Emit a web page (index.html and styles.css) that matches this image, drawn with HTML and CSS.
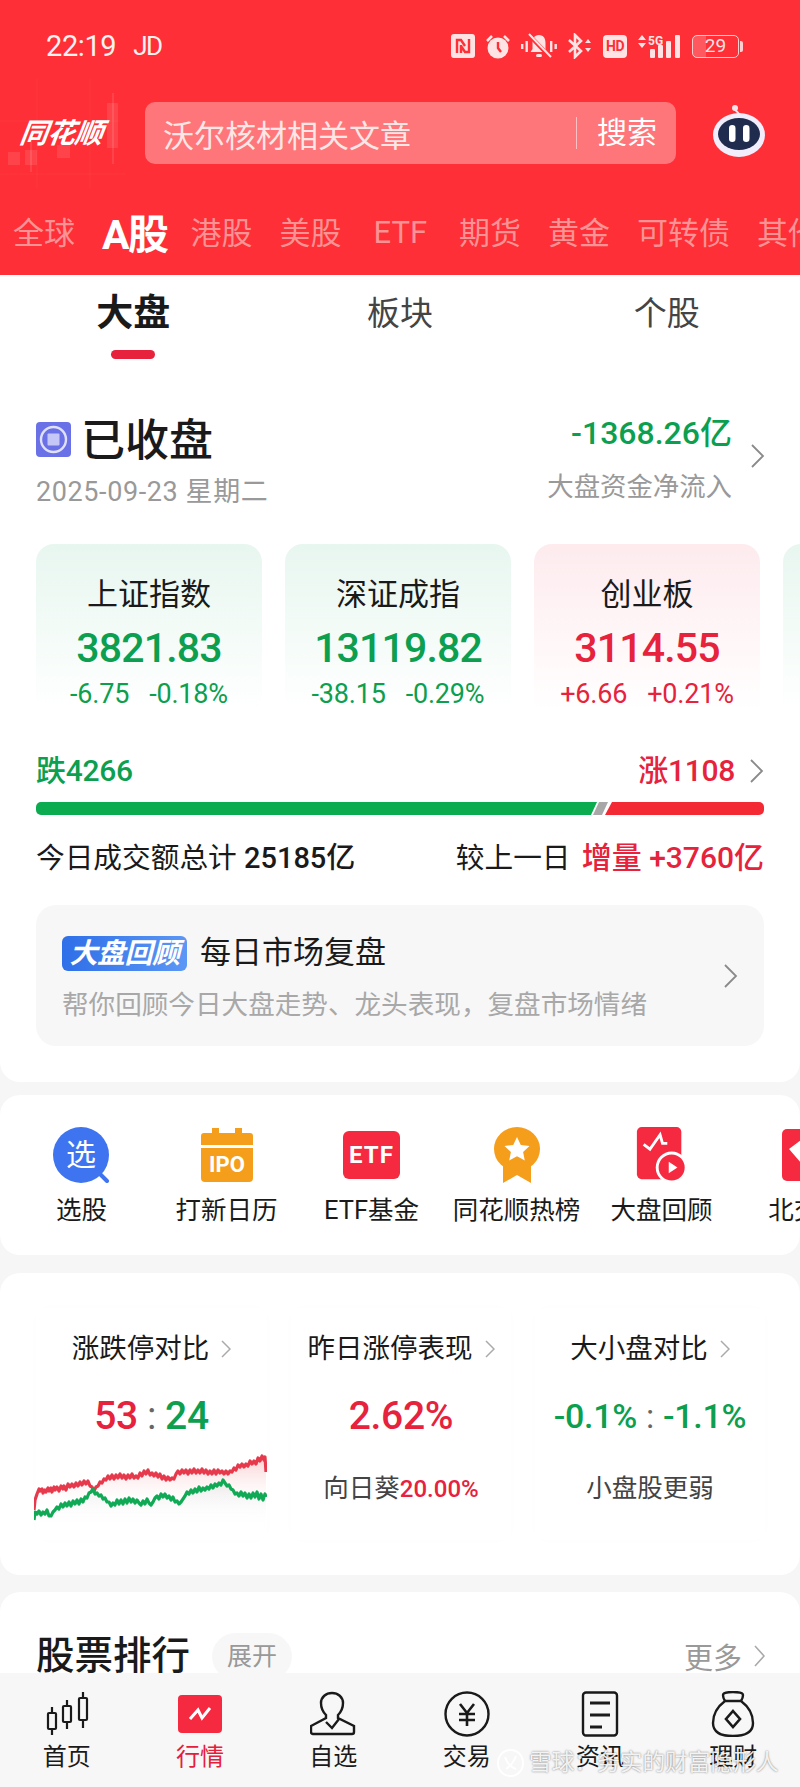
FILE: index.html
```html
<!DOCTYPE html>
<html lang="zh-CN">
<head>
<meta charset="utf-8">
<title>行情</title>
<link rel="stylesheet" href="styles.css">
</head>
<body>
<div class="app">
  <header class="hero">
    <div class="status">
      <div class="clock"><span>22:19</span><span class="carrier">JD</span></div>
      <div class="sys">
        <svg width="24" height="24" viewBox="0 0 24 24"><rect x="0" y="0" width="24" height="24" rx="3" fill="#fde3e3"/><path d="M6 19V6h4l4 6M10 11v8M18 5v13h-4l-4-6" fill="none" stroke="#fe2f36" stroke-width="2.4"/></svg>
        <svg width="26" height="25" viewBox="0 0 26 25"><path d="M2 7l5-5M24 7l-5-5" stroke="#fde3e3" stroke-width="2.6"/><circle cx="13" cy="14" r="10.5" fill="#fde3e3"/><path d="M13 8v6l3 4" fill="none" stroke="#fe2f36" stroke-width="2.4"/></svg>
        <svg width="36" height="26" viewBox="0 0 36 26"><g fill="#fde3e3"><rect x="0" y="11" width="2.4" height="5"/><rect x="4.5" y="8" width="2.4" height="11"/><rect x="29" y="8" width="2.4" height="11"/><rect x="33.5" y="11" width="2.4" height="5"/><path d="M18 2c5 0 6.500 4 6.500 8v6l2 3H9.500l2-3v-6c0-4 1.500-8 6.500-8z"/><rect x="15" y="21" width="6" height="3" rx="1.500"/></g><path d="M8 2l21 22" stroke="#fe2f36" stroke-width="4"/><path d="M8 1l22 23" stroke="#fde3e3" stroke-width="2"/></svg>
        <svg width="26" height="26" viewBox="0 0 26 26"><path d="M2 7l12 11-6 6V2l6 6L2 19" fill="none" stroke="#fde3e3" stroke-width="2.6"/><path d="M18 10l3-4 3 4zM18 15h6l-3 4z" fill="#fde3e3"/></svg>
        <div class="hd">HD</div>
        <svg width="45" height="25" viewBox="0 0 45 25"><path d="M1 6l4-5 4 5zM1 9h8l-4 5z" fill="#fde3e3"/><text x="11" y="11" class="fiveg">5G</text><g fill="#fde3e3"><rect x="13" y="15" width="5" height="9" rx="1"/><rect x="21" y="11" width="5" height="13" rx="1"/><rect x="29" y="7" width="5" height="17" rx="1"/><rect x="38" y="1" width="5" height="23" rx="1"/></g></svg>
        <div class="batt"><span class="batt-num">29</span></div>
      </div>
    </div>
    <div class="search-row">
      <div class="logo">
        <svg class="logo-bg" width="145" height="120" viewBox="0 0 145 120"><g fill="#fff" fill-opacity=".1"><rect x="8" y="74" width="12" height="13"/><rect x="25" y="72" width="12" height="15"/><rect x="30" y="62" width="2" height="32"/><rect x="57" y="67" width="13" height="13"/><rect x="107" y="25" width="11" height="45"/><rect x="112" y="15" width="2" height="71"/></g><g stroke="#fff" stroke-opacity=".05"><path d="M0 43h120M0 96h125M37 0v110M90 0v110"/></g></svg>
        <span class="logo-text">同花顺</span>
      </div>
      <div class="search">
        <span class="search-hint">沃尔核材相关文章</span>
        <span class="search-btn">搜索</span>
      </div>
      <svg class="robot" width="54" height="52" viewBox="0 0 54 52"><circle cx="23" cy="3" r="3" fill="#f5e4ea"/><path d="M23 4c1 3 4 3 4 6" stroke="#f5e4ea" stroke-width="2" fill="none"/><ellipse cx="27" cy="30" rx="26" ry="22" fill="#f1edfb"/><ellipse cx="27" cy="29" rx="21" ry="16" fill="#1f2c4d"/><rect x="17" y="20" width="6.500" height="17" rx="3.200" fill="#fff"/><rect x="31" y="20" width="6.500" height="17" rx="3.200" fill="#fff"/></svg>
    </div>
    <nav class="markets">
      <span class="market">全球</span>
      <span class="market market-on">A股</span>
      <span class="market">港股</span>
      <span class="market">美股</span>
      <span class="market market-latin">ETF</span>
      <span class="market">期货</span>
      <span class="market">黄金</span>
      <span class="market">可转债</span>
      <span class="market">其他</span>
    </nav>
  </header>

  <div class="scroll">
    <section class="panel overview">
      <nav class="subtabs">
        <div class="subtab subtab-on">大盘<i class="subtab-bar"></i></div>
        <div class="subtab">板块</div>
        <div class="subtab">个股</div>
      </nav>

      <div class="close-row">
        <div class="close-left">
          <div class="close-title">
            <svg width="35" height="35" viewBox="0 0 35 35"><rect width="35" height="35" rx="4" fill="#6a70e6"/><circle cx="17.500" cy="17.500" r="12.500" fill="none" stroke="#dfe1fb" stroke-width="2.400"/><rect x="11.500" y="11.500" width="12" height="12" rx="1" fill="#c5c8f6"/></svg>
            <span>已收盘</span>
          </div>
          <div class="close-date">2025-09-23 星期二</div>
        </div>
        <div class="flow">
          <div class="flow-text">
            <div class="flow-num">-1368.26亿</div>
            <div class="flow-label">大盘资金净流入</div>
          </div>
          <svg class="chev-lg" width="15" height="26" viewBox="0 0 15 26"><path d="M2 2l11 11L2 24" fill="none" stroke="#8a8a8a" stroke-width="1.800"/></svg>
        </div>
      </div>

      <div class="indices">
        <div class="index index-down">
          <div class="index-name">上证指数</div>
          <div class="index-val down">3821.83</div>
          <div class="index-chg down"><span>-6.75</span><span>-0.18%</span></div>
        </div>
        <div class="index index-down">
          <div class="index-name">深证成指</div>
          <div class="index-val down">13119.82</div>
          <div class="index-chg down"><span>-38.15</span><span>-0.29%</span></div>
        </div>
        <div class="index index-up">
          <div class="index-name">创业板</div>
          <div class="index-val up">3114.55</div>
          <div class="index-chg up"><span>+6.66</span><span>+0.21%</span></div>
        </div>
        <div class="index index-down"></div>
      </div>

      <div class="breadth">
        <span class="breadth-n down">跌4266</span>
        <span class="breadth-r">
          <span class="breadth-n up">涨1108</span>
          <svg width="15" height="26" viewBox="0 0 15 26"><path d="M2 2l11 11L2 24" fill="none" stroke="#8a8a8a" stroke-width="1.800"/></svg>
        </span>
      </div>
      <div class="bar">
        <i class="bar-green"></i>
        <i class="bar-gray"></i>
        <i class="bar-red"></i>
      </div>

      <div class="turnover">
        <span>今日成交额总计 <b>25185亿</b></span>
        <span>较上一日 <b class="up turnover-delta">增量 +3760亿</b></span>
      </div>

      <div class="review">
        <div class="review-body">
          <div class="review-head">
            <span class="review-badge">大盘回顾</span>
            <span class="review-title">每日市场复盘</span>
          </div>
          <div class="review-sub">帮你回顾今日大盘走势、龙头表现，复盘市场情绪</div>
        </div>
        <svg width="15" height="26" viewBox="0 0 15 26"><path d="M2 2l11 11L2 24" fill="none" stroke="#8a8a8a" stroke-width="1.800"/></svg>
      </div>
    </section>

    <section class="panel shortcuts">
      <div class="shortcut">
        <svg width="58" height="56" viewBox="0 0 58 56"><path d="M44 44l10 10" stroke="#3f74f0" stroke-width="4" stroke-linecap="round"/><circle cx="28" cy="28" r="28" fill="#3f74f0"/><text x="28" y="38" class="icon-xuan">选</text></svg>
        <span class="shortcut-label">选股</span>
      </div>
      <div class="shortcut">
        <svg width="52" height="54" viewBox="0 0 52 54"><path d="M0 8a3 3 0 0 1 3-3h8V0h7v5h16V0h7v5h8a3 3 0 0 1 3 3v9H0z" fill="#f59e1c"/><path d="M0 20h52v30a4 4 0 0 1-4 4H4a4 4 0 0 1-4-4z" fill="#f59e1c"/><text x="26" y="44" class="icon-ipo">IPO</text></svg>
        <span class="shortcut-label">打新日历</span>
      </div>
      <div class="shortcut">
        <svg width="57" height="48" viewBox="0 0 57 48"><rect width="57" height="48" rx="6" fill="#f5293f"/><text x="28.500" y="32" class="icon-etf">ETF</text></svg>
        <span class="shortcut-label">ETF基金</span>
      </div>
      <div class="shortcut">
        <svg width="46" height="56" viewBox="0 0 46 56"><path d="M9 34v22l14-8 14 8V34z" fill="#f59e1c"/><ellipse cx="23" cy="22" rx="23" ry="22" fill="#f59e1c"/><path d="M23 10l3.800 8 8.700 1-6.400 6 1.700 8.600L23 29.300l-7.800 4.300 1.700-8.600-6.400-6 8.700-1z" fill="#fff"/></svg>
        <span class="shortcut-label">同花顺热榜</span>
      </div>
      <div class="shortcut">
        <svg width="52" height="58" viewBox="0 0 52 58"><rect width="46" height="54" rx="5" fill="#f5293f"/><path d="M7 18l6.500 5L24 8l2.500 9h5" fill="none" stroke="#fff" stroke-width="3"/><circle cx="36" cy="42" r="15" fill="#f5293f" stroke="#fff" stroke-width="3"/><path d="M33 36l9 6-9 6z" fill="#fff"/></svg>
        <span class="shortcut-label">大盘回顾</span>
      </div>
      <div class="shortcut">
        <svg width="50" height="52" viewBox="0 0 50 52"><rect width="50" height="52" rx="5" fill="#f5293f"/><path d="M7 20l12-9 13 9-13 14z" fill="#fff"/></svg>
        <span class="shortcut-label">北交所</span>
      </div>
    </section>

    <section class="panel compare">
      <div class="cmp">
        <div class="cmp-title">涨跌停对比<svg width="10" height="20" viewBox="0 0 10 20"><path d="M1 2l8 8-8 8" fill="none" stroke="#aaa" stroke-width="1.500"/></svg></div>
        <div class="cmp-val"><span class="up">53</span><span class="sep">:</span><span class="down">24</span></div>
        <svg class="cmp-chart" width="233" height="80" viewBox="0 0 233 80">
          <defs>
            <linearGradient id="fillRed" x1="0" y1="0" x2="0" y2="1"><stop offset="0" stop-color="#f9c3c6" stop-opacity=".75"/><stop offset="1" stop-color="#fff" stop-opacity="0"/></linearGradient>
            <linearGradient id="fillGreen" x1="0" y1="0" x2="0" y2="1"><stop offset="0" stop-color="#ddd" stop-opacity=".5"/><stop offset="1" stop-color="#fff" stop-opacity="0"/></linearGradient>
          </defs>
          <path d="M0 60L2 47 6 40 14 39 21 38 29 37 37 35 47 33 52 32 56 34 60 40 65 35 70 30 76 26 86 25 99 25 109 23 114 21 125 24 135 29 144 22 155 23 171 20 184 21 196 22 206 15 217 12 226 8 232 8V60H0z" fill="url(#fillRed)"/>
          <path d="M0 70L8 65 17 66 25 59 35 56 45 54 54 47 58 41 68 46 79 55 89 53 104 51 119 53 129 46 145 52 154 43 167 38 182 36 190 31 204 44 218 43 232 47V80H0z" fill="url(#fillGreen)"/>
          <path d="M0 60L1 50 2 47 3 44 5 39 6 41 8 39 9 43 11 40 12 42 14 38 15 41 17 38 18 42 20 37 21 40 23 37 25 41 27 36 29 39 30 36 32 40 34 34 36 37 38 34 40 37 42 33 44 36 46 32 48 35 50 31 52 34 54 31 56 36 58 37 60 41 62 37 64 36 66 32 68 33 70 29 72 30 74 26 76 29 78 25 80 29 82 25 84 28 86 24 88 28 90 25 92 29 94 25 96 28 98 24 100 28 102 26 104 28 106 23 108 26 110 21 112 24 114 20 116 25 118 23 120 26 122 23 124 27 126 24 128 29 130 26 132 30 134 27 136 30 138 28 140 29 142 24 144 21 146 24 148 20 150 23 152 20 154 24 156 20 158 23 160 19 162 23 164 20 166 23 168 19 170 23 172 20 174 24 176 21 178 24 180 20 182 24 184 20 186 23 188 21 190 24 192 21 194 24 196 21 198 22 200 18 202 20 204 15 206 17 208 14 210 17 212 14 214 16 216 11 218 14 220 11 222 14 224 8 226 11 228 6 230 10 231 7 232 22" fill="none" stroke="#e6394c" stroke-width="3.200" stroke-linejoin="round"/>
          <path d="M0 70L1 62 3 64 5 61 7 65 9 62 11 64 13 60 15 66 17 66 19 62 21 60 23 57 25 59 27 54 29 57 31 53 33 56 35 52 37 56 39 51 41 54 43 50 45 54 47 49 49 52 51 47 53 48 55 43 57 42 59 39 61 44 63 43 65 46 67 45 69 49 71 48 73 52 75 52 77 56 79 53 81 55 83 50 85 54 87 50 89 54 91 49 93 53 95 48 97 52 99 49 101 53 103 50 105 53 107 55 109 51 111 54 113 49 115 53 117 55 119 52 121 48 123 46 125 49 127 44 129 47 131 44 133 48 135 46 137 50 139 47 141 52 143 51 145 54 147 52 149 49 151 46 153 42 155 44 157 40 159 43 161 39 163 42 165 37 167 41 169 38 171 40 173 37 175 39 177 35 179 38 181 34 183 36 185 33 187 35 189 30 191 33 193 36 195 35 197 39 199 40 201 44 203 43 205 46 207 42 209 46 211 43 213 48 215 44 217 48 219 43 221 47 223 42 225 49 227 44 229 50 231 44 232 47" fill="none" stroke="#10a955" stroke-width="3.200" stroke-linejoin="round"/>
        </svg>
      </div>
      <div class="cmp">
        <div class="cmp-title">昨日涨停表现<svg width="10" height="20" viewBox="0 0 10 20"><path d="M1 2l8 8-8 8" fill="none" stroke="#aaa" stroke-width="1.500"/></svg></div>
        <div class="cmp-val up">2.62%</div>
        <div class="cmp-sub">向日葵<span class="up">20.00%</span></div>
      </div>
      <div class="cmp">
        <div class="cmp-title">大小盘对比<svg width="10" height="20" viewBox="0 0 10 20"><path d="M1 2l8 8-8 8" fill="none" stroke="#aaa" stroke-width="1.500"/></svg></div>
        <div class="cmp-val cmp-val-sm"><span class="down">-0.1%</span><span class="sep">:</span><span class="down">-1.1%</span></div>
        <div class="cmp-sub">小盘股更弱</div>
      </div>
    </section>

    <section class="panel ranking">
      <h2 class="rank-title">股票排行</h2>
      <span class="rank-pill">展开</span>
      <span class="rank-more">更多<svg width="11" height="24" viewBox="0 0 11 24"><path d="M1 2l9 10-9 10" fill="none" stroke="#aaa" stroke-width="1.600"/></svg></span>
    </section>
  </div>

  <nav class="tabbar">
    <div class="tab">
      <svg width="44" height="44" viewBox="0 0 44 44" fill="none" stroke="#1a1a1a" stroke-width="2.200"><rect x="3" y="21" width="8" height="16" rx="1"/><path d="M7 15v6M7 37v6"/><rect x="18" y="14" width="8" height="16" rx="1"/><path d="M22 8v6M22 30v7"/><rect x="34" y="6" width="8" height="22" rx="1"/><path d="M38 0v6M38 28v8"/></svg>
      <span class="tab-label">首页</span>
    </div>
    <div class="tab tab-on">
      <svg width="44" height="44" viewBox="0 0 44 44"><rect x="0" y="3" width="44" height="38" rx="4" fill="#f5293f"/><path d="M12 27l8-9 4 8 8-10" fill="none" stroke="#fff" stroke-width="3"/></svg>
      <span class="tab-label">行情</span>
    </div>
    <div class="tab">
      <svg width="46" height="44" viewBox="0 0 46 44" fill="none" stroke="#1a1a1a" stroke-width="2.400"><path d="M16 23c-3-3-5-7-5-12 0-6 5-10 11-10s11 4 11 10c0 5-2 9-5 12v3l16 8v6a2 2 0 0 1-2 2H3a2 2 0 0 1-2-2v-6l15-8z"/><path d="M16 30l6 6 7-9"/></svg>
      <span class="tab-label">自选</span>
    </div>
    <div class="tab">
      <svg width="46" height="46" viewBox="0 0 46 46" fill="none" stroke="#1a1a1a" stroke-width="2.400"><circle cx="23" cy="23" r="21.500"/><path d="M16 13l7 9 7-9M15 23h16M15 29h16M23 22v13" stroke-width="2.600"/></svg>
      <span class="tab-label">交易</span>
    </div>
    <div class="tab">
      <svg width="38" height="46" viewBox="0 0 38 46" fill="none" stroke="#1a1a1a" stroke-width="2.400"><rect x="2" y="1.500" width="34" height="43" rx="3"/><path d="M9 12h20M9 24h20M9 36h12" stroke-width="2.800"/></svg>
      <span class="tab-label">资讯</span>
    </div>
    <div class="tab">
      <svg width="44" height="46" viewBox="0 0 44 46" fill="none" stroke="#1a1a1a" stroke-width="2.400"><path d="M14 10c-2-3-2-5-2-6 0-2 3-3 10-3s10 1 10 3c0 1 0 3-2 6"/><path d="M14 10h16c8 6 12 14 12 22 0 9-7 13-20 13S2 41 2 32c0-8 4-16 12-22z"/><path d="M22 20l7 8-7 8-7-8z" stroke-width="2.600"/></svg>
      <span class="tab-label">理财</span>
    </div>
  </nav>

  <div class="watermark">
    <svg width="27" height="28" viewBox="0 0 27 28" fill="none" stroke="#fff" stroke-width="2"><path d="M13.500 1C6 1 1 7 1 14s5 13 12.500 13S26 21 26 14 21 1 13.500 1z"/><path d="M8 8c2 6 5 10 11 12M19 7c-2 5-5 10-10 13"/></svg>
    <span>雪球：务实的财富隐形人</span>
  </div>
</div>
</body>
</html>
```

FILE: styles.css
```css
* { box-sizing: border-box; }
html, body { margin: 0; padding: 0; }
body {
  background: #f6f6f7;
  font-family: Roboto, "Noto Sans CJK SC", sans-serif;
  color: #1a1a1a;
}
.app {
  position: relative;
  width: 800px;
  height: 1787px;
  display: flex;
  flex-direction: column;
  overflow: hidden;
}
.up { color: #e6223c; }
.down { color: #0c9f4f; }

/* red header */
.hero { height: 275px; flex: none; background: #fe2f36; color: #fff; overflow: hidden; }
.status {
  height: 92px;
  padding: 0 58px 0 46px;
  display: flex;
  align-items: center;
  justify-content: space-between;
}
.clock { display: flex; gap: 17px; font-size: 29px; letter-spacing: -.4px; color: #fdf1f1; }
.carrier { font-size: 26px; letter-spacing: -1.500px; line-height: 34px; }
.sys { display: flex; align-items: center; gap: 10px; }
.hd {
  width: 24px; height: 23px;
  background: #fde3e3; color: #fe2f36; border-radius: 4px;
  font-size: 14px; font-weight: 700; line-height: 23px; text-align: center; letter-spacing: -.5px;
}
.fiveg { font-size: 12px; font-weight: 700; fill: #fde3e3; }
.batt {
  position: relative;
  width: 47px; height: 23px;
  margin-right: 3px;
  border: 1.500px solid #fbcfcf; border-radius: 5px;
  font-size: 19px; line-height: 20px; text-align: center; color: #fde3e3;
  background: linear-gradient(90deg, rgba(255,255,255,.2) 30%, transparent 30%);
}
.batt::after {
  content: "";
  position: absolute; right: -5px; top: 5px;
  width: 3px; height: 11px; border-radius: 0 2px 2px 0; background: #fbcfcf;
}
.search-row { height: 98px; display: flex; align-items: flex-start; }
.logo { position: relative; width: 145px; height: 98px; padding: 22px 0 0 20px; }
.logo-bg { position: absolute; left: 0; top: -14px; }
.logo-text {
  position: relative;
  display: block;
  font-size: 28px; font-style: italic; font-weight: 700; line-height: 40px; letter-spacing: -.5px;
  transform: skewX(-8deg);
  white-space: nowrap;
}
.search {
  width: 531px; height: 62px; margin-top: 10px;
  background: rgba(255,255,255,.34);
  border-radius: 10px;
  display: flex; align-items: center; justify-content: space-between;
  padding: 0 19px 0 18px;
}
.search-hint { font-size: 31px; color: #fde6e6; }
.search-btn {
  font-size: 30px; color: #fff; line-height: 32px;
  padding-left: 20px; border-left: 1px solid rgba(255,255,255,.55);
}
.robot { margin: 13px 0 0 36px; }
.markets {
  height: 85px; display: flex; align-items: center; gap: 27px;
  padding-left: 13px; padding-bottom: 4px; white-space: nowrap;
}
.market { flex: none; font-size: 31px; color: #fb9294; }
.market-latin { margin: 0 5px; font-size: 31px; padding-top: 3px; }
.market-on { margin-right: -4px; font-size: 41px; font-weight: 700; color: #fff; letter-spacing: -1.500px; }

/* scroll area */
.scroll { flex: 1; min-height: 0; overflow: hidden; }
.panel { background: #fff; border-radius: 20px; }

.overview { border-radius: 0 0 20px 20px; padding: 0 36px 36px; }
.subtabs { display: grid; grid-template-columns: repeat(3, 1fr); height: 95px; margin: 0 -36px; }
.subtab {
  display: flex; flex-direction: column; align-items: center;
  padding-top: 18px;
  font-size: 33px; line-height: 42px; color: #444;
}
.subtab-on { font-size: 37px; font-weight: 700; color: #1a1a1a; }
.subtab-bar { width: 44px; height: 9px; margin-top: 15px; border-radius: 5px; background: #e6223c; }

.close-row { margin-top: 41px; display: flex; justify-content: space-between; }
.close-left { margin-top: 5px; }
.close-title { display: flex; align-items: center; gap: 10px; font-size: 44px; line-height: 50px; font-weight: 500; color: #1a1a1a; }
.close-title svg { margin-top: -3px; }
.close-date { margin-top: 10px; font-size: 27px; line-height: 32px; color: #999; letter-spacing: .6px; }
.flow { display: flex; align-items: center; gap: 18px; margin: -3px -1px 0 0; }
.flow-text { text-align: right; }
.flow-num { font-size: 32px; line-height: 40px; font-weight: 500; color: #0c9f4f; }
.flow-label { margin-top: 17px; font-size: 26.400px; line-height: 34px; color: #999; }
.chev-lg { margin-top: -4px; }

.indices { margin: 36px -36px 0 0; display: flex; gap: 23px; overflow: hidden; }
.index {
  flex: none; width: 226px; height: 166px;
  border-radius: 18px 18px 0 0;
  padding-top: 33px; text-align: center;
}
.index-down { background: linear-gradient(180deg, #e8f6f0 0%, #f3fbf7 50%, #fff 100%); }
.index-up { background: linear-gradient(180deg, #fdebee 0%, #fff7f8 60%, #fff 100%); }
.index-name { font-size: 31px; line-height: 36px; }
.index-val { margin-top: 11px; font-size: 41px; line-height: 48px; font-weight: 500; letter-spacing: -.85px; }
.index-chg { margin-top: 8px; display: flex; justify-content: center; gap: 20px; font-size: 27px; line-height: 28px; letter-spacing: -.2px; }

.breadth { margin-top: 43px; display: flex; justify-content: space-between; align-items: center; height: 36px; }
.breadth-n { font-size: 30px; line-height: 36px; font-weight: 500; letter-spacing: -.3px; }
.breadth-r { display: flex; align-items: center; gap: 14px; }
.bar { margin-top: 13px; height: 13px; display: flex; }
.bar i { display: block; height: 13px; flex: none; }
.bar-green { width: 561px; background: #0bab4f; border-radius: 5px 0 0 5px; clip-path: polygon(0 0, 100% 0, calc(100% - 6px) 100%, 0 100%); }
.bar-gray { width: 15px; margin-left: -4px; background: #a8a8a8; clip-path: polygon(6px 0, 100% 0, 9px 100%, 0 100%); }
.bar-red { width: 159px; margin-left: -3px; background: #f32a33; border-radius: 0 5px 5px 0; clip-path: polygon(7px 0, 100% 0, 100% 100%, 0 100%); }

.turnover { margin-top: 25px; display: flex; justify-content: space-between; font-size: 28.700px; line-height: 36px; }
.turnover b { font-weight: 500; font-size: 29px; }
.turnover .turnover-delta { margin-left: 4px; font-size: 30px; }

.review {
  margin-top: 29px; height: 141px;
  background: #f7f7f8; border-radius: 20px;
  padding: 0 26px; display: flex; align-items: center; justify-content: space-between;
}
.review-body { padding-top: 6px; }
.review-head { display: flex; align-items: center; gap: 13px; height: 36px; }
.review-badge {
  width: 125px; height: 35px;
  background: linear-gradient(90deg, #2f6fe8, #5b97f5);
  border-radius: 6px;
  color: #fff; font-size: 28px; font-weight: 700; font-style: italic; line-height: 35px; text-align: center; letter-spacing: -.5px;
  white-space: nowrap;
}
.review-title { font-size: 31px; line-height: 36px; }
.review-sub { margin-top: 17px; font-size: 26.600px; line-height: 34px; color: #a8a8a8; }

.shortcuts {
  margin-top: 13px; height: 160px;
  padding: 32px 0 0 9px;
  display: grid; grid-auto-flow: column; grid-auto-columns: 145px;
  overflow: hidden;
}
.shortcut { display: flex; flex-direction: column; align-items: center; }
.shortcut svg { height: 56px; flex: none; }
.shortcut-label { margin-top: 10px; font-size: 25.500px; line-height: 34px; white-space: nowrap; }
.icon-xuan { font-size: 30px; font-weight: 400; fill: #fff; text-anchor: middle; }
.icon-ipo { font-size: 22px; font-weight: 700; fill: #fff; text-anchor: middle; }
.icon-etf { font-size: 24px; font-weight: 700; fill: #fff; text-anchor: middle; letter-spacing: 1px; }

.compare {
  margin-top: 18px; height: 302px;
  padding: 35px 0 0 36px;
  display: grid; grid-template-columns: 231px 220px 230px; column-gap: 24px; align-items: start;
}
.cmp {
  height: 232px; padding-top: 23px;
  display: flex; flex-direction: column; align-items: center;
  border-radius: 10px;
  box-shadow: 0 0 14px rgba(90, 60, 120, .012);
  text-align: center;
}
.cmp-title { display: flex; align-items: center; gap: 12px; font-size: 27.500px; line-height: 36px; white-space: nowrap; }
.cmp-val { margin-top: 25px; font-size: 39px; line-height: 48px; font-weight: 500; white-space: nowrap; letter-spacing: -.3px; }
.cmp-val-sm { font-size: 34px; }
.sep { margin: 0 9px; color: #666; font-weight: 400; }
.cmp-chart { margin: 10px 0 0 -2px; display: block; }
.cmp-sub { margin-top: 31px; font-size: 25.500px; line-height: 34px; color: #444; white-space: nowrap; }
.cmp-sub .up { font-weight: 500; font-size: 24px; }

.ranking {
  margin-top: 17px; height: 200px;
  padding: 40px 35px 0 36px;
  display: flex; align-items: flex-start;
}
.rank-title { margin: 0; font-size: 38.500px; line-height: 48px; font-weight: 500; }
.rank-pill {
  margin: 1px 0 0 22px; width: 80px; height: 47px;
  background: #f7f7f7; border-radius: 24px;
  font-size: 25px; line-height: 47px; text-align: center; color: #999;
}
.rank-more { margin-left: auto; display: flex; align-items: center; gap: 12px; height: 48px; font-size: 29px; color: #999; }

/* bottom bar */
.tabbar {
  flex: none; height: 114px; background: #f7f7f7;
  display: grid; grid-template-columns: repeat(6, 1fr);
  padding-top: 18px;
}
.tab { display: flex; flex-direction: column; align-items: center; }
.tab svg { height: 46px; flex: none; }
.tab-label { margin-top: 5px; font-size: 24px; line-height: 30px; color: #1a1a1a; }
.tab-on .tab-label { color: #e3203c; }

.watermark {
  position: absolute; left: 497px; top: 1748px;
  display: flex; align-items: center; gap: 5px;
  font-size: 22.700px; line-height: 30px;
  color: rgba(255,255,255,.9);
  text-shadow: 0 0 2px rgba(0,0,0,.55);
  white-space: nowrap;
}
```
